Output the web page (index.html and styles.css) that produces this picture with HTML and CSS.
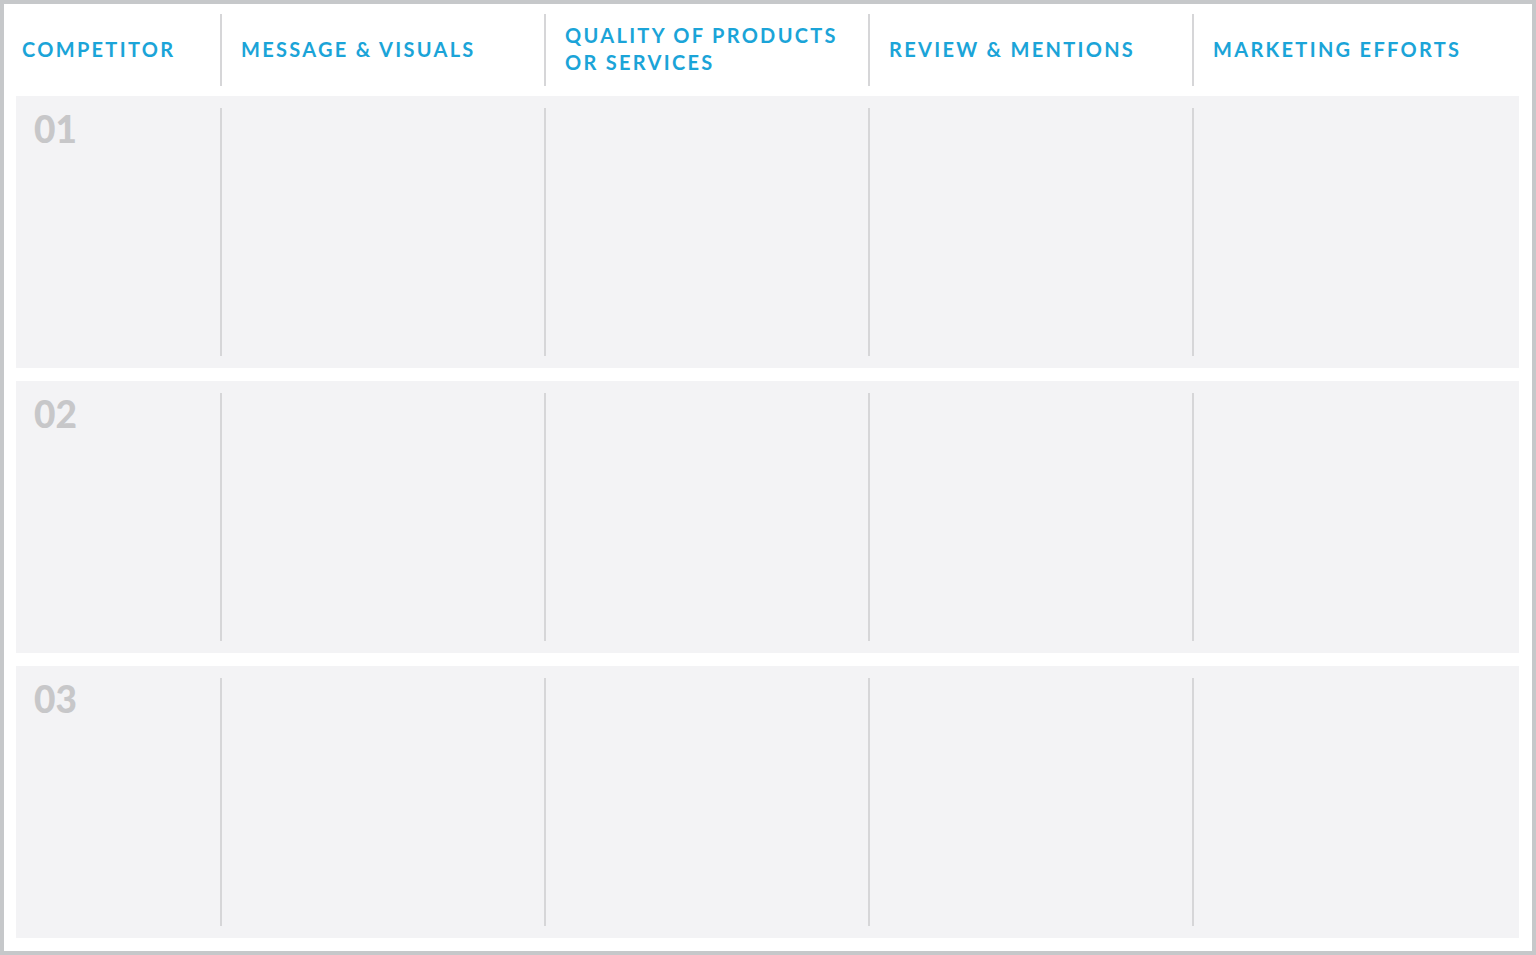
FILE: index.html
```html
<!DOCTYPE html>
<html lang="en">
<head>
  <meta charset="UTF-8" />
  <title>Competitor Analysis</title>
  <link rel="stylesheet" href="styles.css">
</head>
<body>
  <div class="sheet">
    <div class="grid head">
      <div class="cell first"><span>Competitor</span></div>
      <div class="cell"><span>Message &amp; Visuals</span></div>
      <div class="cell"><span>Quality of products<br>or services</span></div>
      <div class="cell"><span>Review &amp; Mentions</span></div>
      <div class="cell"><span>Marketing Efforts</span></div>
    </div>

    <div class="grid row">
      <div class="cell first"><span class="num">01</span></div>
      <div class="cell"></div>
      <div class="cell"></div>
      <div class="cell"></div>
      <div class="cell"></div>
    </div>

    <div class="grid row">
      <div class="cell first"><span class="num">02</span></div>
      <div class="cell"></div>
      <div class="cell"></div>
      <div class="cell"></div>
      <div class="cell"></div>
    </div>

    <div class="grid row">
      <div class="cell first"><span class="num">03</span></div>
      <div class="cell"></div>
      <div class="cell"></div>
      <div class="cell"></div>
      <div class="cell"></div>
    </div>
  </div>
</body>
</html>
```

FILE: styles.css
```css
html, body {
  margin: 0;
  padding: 0;
}

body {
  background: #fff;
  font-family: Lato, "Liberation Sans", sans-serif;
}

.sheet {
  box-sizing: border-box;
  width: 1536px;
  height: 955px;
  border: 4px solid #c6c8ca;
  padding: 10px 13px 13px 12px;
  display: flex;
  flex-direction: column;
  gap: 13px;
  background: #fff;
}

.grid {
  display: grid;
  grid-template-columns: 204px 324px 324px 324px 1fr;
}

.head {
  height: 72px;
  margin-bottom: -3px;
}

.head .cell {
  display: flex;
  align-items: center;
  padding: 0 0 2px 19px;
  color: #1ba4d8;
  font-weight: 700;
  font-size: 20px;
  line-height: 27px;
  letter-spacing: 2.3px;
  text-transform: uppercase;
}

.head .cell.first {
  padding-left: 6px;
}

.cell {
  border-left: 2px solid #d6d6d8;
}

.cell.first {
  border-left: none;
}

.row {
  height: 272px;
  background: #f3f3f5;
  padding: 12px 0;
  box-sizing: border-box;
}

.row .cell.first {
  padding: 1px 0 0 18px;
}

.num {
  font-size: 37px;
  font-weight: 900;
  color: #c7c7c9;
  line-height: 40px;
}
```
